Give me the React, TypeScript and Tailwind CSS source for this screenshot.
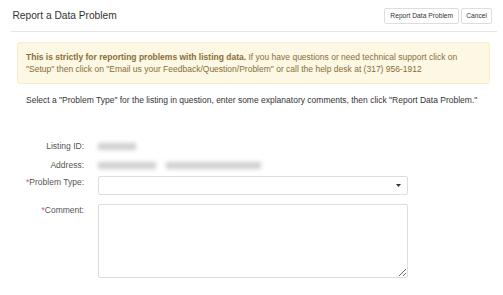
import React from "react";

export default function App() {
  return (
    <div
      className="w-[503px] h-[295px] overflow-hidden bg-white text-[#333]"
      style={{ fontFamily: '"Liberation Sans", Arial, sans-serif' }}
    >
      <div className="ml-[11px] mr-[6px] h-[32px] border-b border-[#e5e5e5] flex items-center justify-between pl-[1.5px] pr-[5px]">
        <div className="text-[10.2px] leading-[12px] text-[#333]">Report a Data Problem</div>
        <div className="flex gap-[2px]">
          <button className="h-[16px] px-[5px] border border-[#ddd] rounded-[2px] bg-white text-[6.7px] leading-[14px] text-[#333]">
            Report Data Problem
          </button>
          <button className="h-[16px] px-[4px] border border-[#ddd] rounded-[2px] bg-white text-[6.7px] leading-[14px] text-[#333]">
            Cancel
          </button>
        </div>
      </div>

      <div className="ml-[17px] w-[473px] mt-[10px] h-[42px] bg-[#fcf8e3] border border-[#faebcc] rounded-[3px] pl-[8px] pr-[16px] pt-[8px] text-[8.5px] leading-[12px] text-[#8a6d3b]">
        <span className="font-bold">This is strictly for reporting problems with listing data.</span> If you have
        questions or need technical support click on "Setup" then click on "Email us your Feedback/Question/Problem" or
        call the help desk at (317) 956-1912
      </div>

      <div className="ml-[26px] mt-[10px] text-[8.5px] leading-[12px] text-[#333]">
        Select a "Problem Type" for the listing in question, enter some explanatory comments, then click "Report Data
        Problem."
      </div>

      <div className="mt-[34px] text-[8.5px] leading-[12px] text-[#555]">
        <div className="flex">
          <div className="w-[84px] text-right">Listing ID:</div>
          <div className="ml-[14px] flex items-center h-[12px]">
            <div className="w-[38px] h-[7px] bg-[#cfcfcf] blur-[2px]" />
          </div>
        </div>
        <div className="flex mt-[7px]">
          <div className="w-[84px] text-right">Address:</div>
          <div className="ml-[14px] flex items-center h-[12px] gap-[10px]">
            <div className="w-[58px] h-[7px] bg-[#cfcfcf] blur-[2px]" />
            <div className="w-[95px] h-[7px] bg-[#cfcfcf] blur-[2px]" />
          </div>
        </div>
        <div className="flex mt-[5px]">
          <div className="w-[84px] text-right">
            <span className="text-[#d9534f]">*</span>Problem Type:
          </div>
          <div className="ml-[14px] w-[310px] h-[19px] border border-[#ddd] rounded-[2px] bg-white flex items-center justify-end pr-[6px]">
            <svg width="5" height="3" viewBox="0 0 5 3">
              <path d="M0 0 H5 L2.5 3 Z" fill="#333" />
            </svg>
          </div>
        </div>
        <div className="flex mt-[9px]">
          <div className="w-[84px] text-right">
            <span className="text-[#d9534f]">*</span>Comment:
          </div>
          <textarea className="ml-[14px] w-[310px] h-[74px] border border-[#ddd] rounded-[2px] bg-white outline-none" />
        </div>
      </div>
    </div>
  );
}
